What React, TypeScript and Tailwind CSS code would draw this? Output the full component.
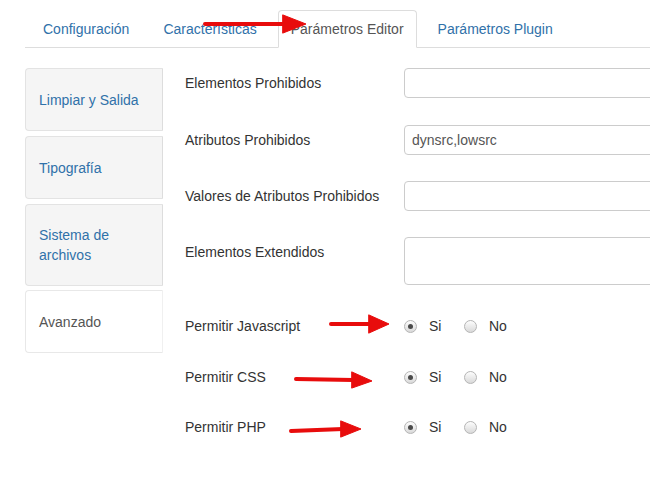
import React from 'react'

const topTabs = ['Configuración', 'Características', 'Parámetros Editor', 'Parámetros Plugin']
const sideTabs = [
  { label: 'Limpiar y Salida', cls: 'pt-[21px] pb-[20px] mb-[5px]' },
  { label: 'Tipografía', cls: 'pt-[21px] pb-[20px] mb-[5px]' },
  { label: 'Sistema de archivos', cls: 'pt-[20px] pb-[20px] mb-[4px]' },
  { label: 'Avanzado', cls: 'pt-[21px] pb-[20px]' },
]

function Radio({ checked }: { checked: boolean }) {
  return (
    <span className="relative inline-flex h-[13px] w-[13px] shrink-0 items-center justify-center rounded-full border border-[#b5b5b5] bg-gradient-to-b from-[#fdfdfd] to-[#d9d9d9]">
      {checked && <span className="h-[5px] w-[5px] rounded-full bg-[#4a4a4a]" />}
    </span>
  )
}

function RadioRow({ label, className }: { label: string; className: string }) {
  return (
    <div className={`flex h-5 items-center ${className}`}>
      <div className="w-[219px] leading-5 text-[#333]">{label}</div>
      <div className="flex w-[60px] items-center">
        <Radio checked />
        <span className="ml-[12px] text-[#333]">Si</span>
      </div>
      <div className="flex items-center">
        <Radio checked={false} />
        <span className="ml-[12px] text-[#333]">No</span>
      </div>
    </div>
  )
}

function Field({ label, value, tall, className }: { label: string; value?: string; tall?: boolean; className: string }) {
  return (
    <div className={`flex ${className}`}>
      <div className="w-[219px] shrink-0 pt-[5px] leading-5 text-[#333]">{label}</div>
      <div
        className={`w-[300px] shrink-0 rounded-[4px] border border-[#cccccc] bg-white pl-[7px] leading-[28px] text-[#555] ${
          tall ? 'h-[48px]' : 'h-[30px]'
        }`}
      >
        {value}
      </div>
    </div>
  )
}

export default function App() {
  return (
    <div className="relative h-[482px] w-[650px] overflow-hidden bg-white text-[14px] font-['Liberation_Sans',Arial,sans-serif]">
      <div className="pl-[25px] pt-[10px]">
        <ul className="flex gap-[8px] border-b border-[#dddddd] pl-[5px]">
          {topTabs.map((t, i) => (
            <li
              key={t}
              className={`-mb-px rounded-t-[4px] border px-3 py-2 leading-5 whitespace-nowrap ${
                i === 2 ? 'border-[#dddddd] border-b-white bg-white text-[#555]' : 'border-transparent text-[#3071a9]'
              }`}
            >
              {t}
            </li>
          ))}
        </ul>
      </div>

      <div className="ml-[25px] mt-[20px] flex">
        <div className="flex w-[138px] shrink-0 flex-col">
          {sideTabs.map((t, i) => {
            const active = i === 3
            return (
              <div
                key={t.label}
                className={`rounded-l-[4px] border pl-[13px] pr-3 leading-5 ${t.cls} ${
                  active
                    ? 'border-[#e8e8e8] border-r-[#f0f0f0] bg-white text-[#555]'
                    : 'border-[#e3e3e3] border-r-[#dddddd] bg-[#f5f5f5] text-[#3071a9]'
                }`}
              >
                {t.label === 'Sistema de archivos' ? (
                  <>
                    Sistema de
                    <br />
                    archivos
                  </>
                ) : (
                  t.label
                )}
              </div>
            )
          })}
        </div>

        <div className="ml-[22px] flex flex-col">
          <Field label="Elementos Prohibidos" className="mb-[27px]" />
          <Field label="Atributos Prohibidos" value="dynsrc,lowsrc" className="mb-[26px]" />
          <Field label="Valores de Atributos Prohibidos" className="mb-[26px]" />
          <Field label="Elementos Extendidos" tall className="mb-[31px]" />
          <RadioRow label="Permitir Javascript" className="mb-[31px]" />
          <RadioRow label="Permitir CSS" className="mb-[30px]" />
          <RadioRow label="Permitir PHP" className="" />
        </div>
      </div>

      <svg className="pointer-events-none absolute left-0 top-0" width="650" height="482" viewBox="0 0 650 482">
        <g fill="#e80c0c" stroke="#e80c0c" strokeLinecap="round">
          <line x1="205" y1="24" x2="285" y2="24" strokeWidth="4" />
          <polygon points="283,15 306,24 283,33" strokeWidth="1" />
          <line x1="331" y1="324" x2="370" y2="324" strokeWidth="4" />
          <polygon points="369,315 389,324 369,333" strokeWidth="1" />
          <line x1="296" y1="379" x2="353" y2="380" strokeWidth="4" />
          <polygon points="352,372 372,381 352,388" strokeWidth="1" />
          <line x1="291" y1="431" x2="343" y2="429" strokeWidth="4" />
          <polygon points="341,421 361,429 341,437" strokeWidth="1" />
        </g>
      </svg>
    </div>
  )
}
